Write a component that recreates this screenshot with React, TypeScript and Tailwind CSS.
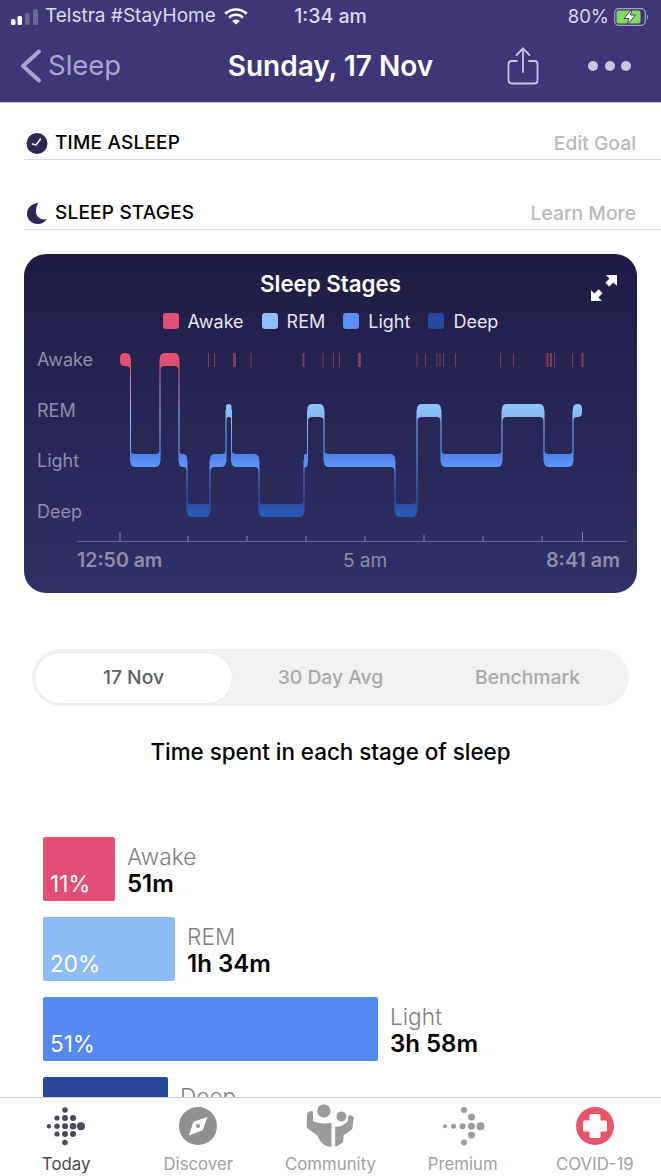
const levels: Record<string, { y: number; fill: string }> = {
  awake: { y: 353, fill: 'url(#bandAwake)' },
  rem: { y: 404, fill: 'url(#bandRem)' },
  light: { y: 454, fill: 'url(#bandLight)' },
  deep: { y: 504, fill: 'url(#bandDeep)' },
};

const segments: [string, number, number][] = [
  ['awake', 120, 130.5],
  ['light', 130.5, 160],
  ['awake', 160, 179],
  ['light', 179, 187],
  ['deep', 187, 210],
  ['light', 210, 226],
  ['rem', 226, 231.5],
  ['light', 231.5, 259],
  ['deep', 259, 304],
  ['light', 304, 307.5],
  ['rem', 307.5, 324],
  ['light', 324, 395],
  ['deep', 395, 417],
  ['rem', 417, 441],
  ['light', 441, 502],
  ['rem', 502, 544],
  ['light', 544, 573],
  ['rem', 573, 582],
];

const awakeTicks: [number, number][] = [
  [208, 1], [214, 1], [233, 3], [250.5, 1], [302.5, 2], [322.5, 1], [333, 1], [339, 1], [358, 3], [416.5, 1],
  [425, 1], [436.5, 1], [439.5, 1], [443, 1], [455, 1], [500, 1], [513, 1], [546.5, 2], [550, 2], [554, 1],
  [572, 1], [581.5, 2],
];

const axisTicks: [number, number][] = [
  [120, 532], [188, 536], [247, 536], [306, 536], [365, 536], [424, 535], [483, 536], [542, 536], [582.5, 532],
];

const H = 13;

function bandPath(i: number) {
  const [name, x0, x1] = segments[i];
  const y = levels[name].y;
  const prev = i > 0 ? levels[segments[i - 1][0]].y : null;
  const next = i < segments.length - 1 ? levels[segments[i + 1][0]].y : null;
  const r = Math.min(5, (x1 - x0) / 2);
  const b = y + H;
  const prevAbove = prev !== null && prev < y;
  const prevBelow = prev !== null && prev > y;
  const nextAbove = next !== null && next < y;
  const nextBelow = next !== null && next > y;
  let d = prevAbove ? `M${x0} ${y - r} Q${x0} ${y} ${x0 + r} ${y}` : `M${x0} ${y + r} Q${x0} ${y} ${x0 + r} ${y}`;
  d += nextAbove ? ` L${x1 - r} ${y} Q${x1} ${y} ${x1} ${y - r}` : ` L${x1 - r} ${y} Q${x1} ${y} ${x1} ${y + r}`;
  d += nextBelow ? ` L${x1} ${b + r} Q${x1} ${b} ${x1 - r} ${b}` : ` L${x1} ${b - r} Q${x1} ${b} ${x1 - r} ${b}`;
  d += prevBelow ? ` L${x0 + r} ${b} Q${x0} ${b} ${x0} ${b + r}` : ` L${x0 + r} ${b} Q${x0} ${b} ${x0} ${b - r}`;
  return d + ' Z';
}

function SleepChart() {
  return (
    <svg viewBox="24 345 613 248" className="block h-[248px] w-[613px]">
      <defs>
        <linearGradient id="link" gradientUnits="userSpaceOnUse" x1="0" y1="360" x2="0" y2="510">
          <stop offset="0" stopColor="#e6506f" />
          <stop offset="0.36" stopColor="#8dc0fa" />
          <stop offset="0.7" stopColor="#5b8ff7" />
          <stop offset="1" stopColor="#2a55ad" />
        </linearGradient>
        <linearGradient id="bandAwake" gradientUnits="userSpaceOnUse" x1="0" y1="353" x2="0" y2="367">
          <stop offset="0" stopColor="#e8506e" />
          <stop offset="1" stopColor="#d94f72" />
        </linearGradient>
        <linearGradient id="bandRem" gradientUnits="userSpaceOnUse" x1="0" y1="404" x2="0" y2="417">
          <stop offset="0" stopColor="#92c6fd" />
          <stop offset="1" stopColor="#84b8f5" />
        </linearGradient>
        <linearGradient id="bandLight" gradientUnits="userSpaceOnUse" x1="0" y1="449" x2="0" y2="467">
          <stop offset="0" stopColor="#4a7ae0" />
          <stop offset="1" stopColor="#5f95ff" />
        </linearGradient>
        <linearGradient id="bandDeep" gradientUnits="userSpaceOnUse" x1="0" y1="499" x2="0" y2="517">
          <stop offset="0" stopColor="#274a9a" />
          <stop offset="1" stopColor="#2c5abb" />
        </linearGradient>
      </defs>
      {[
        ['Awake', 366],
        ['REM', 417],
        ['Light', 467],
        ['Deep', 518],
      ].map(([label, y]) => (
        <text key={label} x="37" y={y} fontSize="18" fill="#8e8eab">
          {label}
        </text>
      ))}
      {awakeTicks.map(([x, w]) => (
        <rect key={x} x={x} y="353" width={w} height="14" fill="#e6506f" opacity="0.5" />
      ))}
      {segments.slice(1).map(([name, x], i) => {
        const a = levels[segments[i][0]].y;
        const b = levels[name].y;
        return (
          <rect key={x} x={x - 0.5} y={Math.min(a, b) + 6} width="1" height={Math.abs(a - b) + 2} fill="url(#link)" />
        );
      })}
      {segments.map(([name], i) => (
        <path key={i} d={bandPath(i)} fill={levels[name].fill} />
      ))}
      <rect x="77" y="541" width="550" height="1" fill="#67678c" />
      {axisTicks.map(([x, top]) => (
        <rect key={x} x={x - 0.5} y={top} width="1" height={541 - top} fill="#8b8ba8" />
      ))}
      <text x="77" y="567" fontSize="19.500" fontWeight="600" fill="#8e8eab">
        12:50 am
      </text>
      <text x="365" y="567" fontSize="19" textAnchor="middle" fill="#8e8eab">
        5 am
      </text>
      <text x="620" y="567" fontSize="19.800" fontWeight="600" textAnchor="end" fill="#8e8eab">
        8:41 am
      </text>
    </svg>
  );
}

function SignalBars() {
  return (
    <svg width="28" height="16" viewBox="0 0 28 16" className="shrink-0">
      <rect x="0" y="10" width="4.5" height="6" rx="1.5" fill="#fff" />
      <rect x="6.5" y="7" width="4.5" height="9" rx="1.5" fill="#fff" />
      <rect x="14" y="4" width="4.5" height="12" rx="1.5" fill="#6e6899" />
      <rect x="22" y="0" width="5" height="16" rx="1.5" fill="#6e6899" />
    </svg>
  );
}

function WifiIcon() {
  return (
    <svg width="24" height="17" viewBox="0 0 24 17" fill="none" stroke="#fff" strokeWidth="2.6" className="shrink-0">
      <path d="M1.2 5.8C7.2 0 16.8 0 22.8 5.8" />
      <path d="M5 9.6C9 5.8 15 5.8 19 9.6" />
      <path d="M12 16.6 8.2 13C10.4 11 13.6 11 15.8 13Z" fill="#fff" stroke="none" />
    </svg>
  );
}

function BatteryIcon() {
  return (
    <svg width="36" height="18" viewBox="0 0 36 18" className="shrink-0">
      <rect x="0.7" y="0.7" width="30.6" height="16.6" rx="4" fill="none" stroke="#a3a0c4" strokeWidth="1.2" />
      <rect x="2.5" y="2.5" width="24" height="13" rx="2.2" fill="#7fdc5c" />
      <path d="M33 6.5c1.6.5 1.6 4.5 0 5Z" fill="#a3a0c4" />
      <path d="M18 1 10 10.5h5L13 17l8.500-10h-5Z" fill="#fff" stroke="#3f3677" strokeWidth="1" />
    </svg>
  );
}

function ShareIcon() {
  return (
    <svg width="32" height="38" viewBox="0 0 32 38" fill="none" stroke="#c9c6e0" strokeWidth="1.8" strokeLinecap="round" strokeLinejoin="round">
      <path d="M10 14H4.500a3 3 0 0 0-3 3v16.500a3 3 0 0 0 3 3h23a3 3 0 0 0 3-3V17a3 3 0 0 0-3-3H22" />
      <path d="M16 25V1.500" />
      <path d="M9.500 8 16 1.500 22.500 8" />
    </svg>
  );
}

function ExpandIcon() {
  return (
    <svg width="28" height="28" viewBox="0 0 28 28" fill="#fff">
      <path d="M16 1h11v11l-3.600-3.600-4.200 4.200-3.900-3.900 4.200-4.200Z" />
      <path d="M1 16v11h11l-3.600-3.600 4.200-4.200-3.900-3.900-4.200 4.200Z" />
    </svg>
  );
}

function ClockIcon() {
  return (
    <svg width="22" height="21" viewBox="0 0 22 21">
      <circle cx="11" cy="10.500" r="10.500" fill="#2c2855" />
      <path d="M10 12 14.500 6M10 12 6.500 11" stroke="#fff" strokeWidth="1.500" strokeLinecap="round" fill="none" />
    </svg>
  );
}

function MoonIcon() {
  return (
    <svg width="22" height="21" viewBox="0 0 22 21">
      <path d="M12.500 0C7 .3 1 4 1 10.500S6.500 21 11.500 21c4 0 7.500-2 9.500-5-5.500 1.500-11-1.500-11-7.500C10 5 11 2 12.500 0Z" fill="#2c2855" />
    </svg>
  );
}

function SectionRow({ icon, title, action, className }: { icon: React.ReactNode; title: string; action: string; className: string }) {
  return (
    <div className={`ml-[24px] flex h-[32px] items-center border-b border-[#dedede] pl-[2px] pr-[25px] ${className}`}>
      <span className="mr-[7px] flex w-[22px] justify-center">{icon}</span>
      <span className="text-[19px] font-medium tracking-[0.2px] text-black">{title}</span>
      <span className="ml-auto text-[19.300px] font-medium text-[#b9b9b9]">{action}</span>
    </div>
  );
}

const legend = [
  { label: 'Awake', color: 'bg-[#e25175]' },
  { label: 'REM', color: 'bg-[#8dc0fa]' },
  { label: 'Light', color: 'bg-[#5b8ff7]' },
  { label: 'Deep', color: 'bg-[#2747a0]' },
];

const bars = [
  { label: 'Awake', time: '51m', pct: '11%', width: 'w-[72px]', color: 'bg-[#e04e73]' },
  { label: 'REM', time: '1h 34m', pct: '20%', width: 'w-[132px]', color: 'bg-[#8dbdf6]' },
  { label: 'Light', time: '3h 58m', pct: '51%', width: 'w-[335px]', color: 'bg-[#5488f2]' },
  // only the top of this row is in view
  { label: 'Deep', time: '\u00a0', pct: '', width: 'w-[125px]', color: 'bg-[#27479b]' },
];

function FitbitDots({ dots, fill }: { dots: number[][]; fill: string }) {
  return (
    <svg width="44" height="44" viewBox="0 0 44 44">
      {dots.map(([x, y, r]) => (
        <circle key={`${x}-${y}`} cx={x} cy={y} r={r} fill={fill} />
      ))}
    </svg>
  );
}

const todayDots = [
  [5, 22.300, 2.200], [13, 22.300, 2.700], [21, 22.300, 3], [29, 22.300, 3.300], [37, 22.300, 4],
  [13, 14, 2.600], [21, 14, 3], [29, 14, 3], [13, 30, 2.600], [21, 30, 3], [29, 30, 3],
  [21, 6, 2.800], [21, 38.500, 2.800],
];

const premiumDots = [
  [4, 22.300, 2], [12.500, 22.300, 2.500], [21.500, 22.300, 3], [30.500, 22.300, 3.500], [39.500, 22.300, 4],
  [30.500, 13, 3.500], [30.500, 31, 3.500], [23, 6, 3], [23, 38.500, 3],
];

function CompassIcon() {
  return (
    <svg width="44" height="44" viewBox="0 0 44 44">
      <circle cx="22" cy="22" r="19" fill="#8f8f8f" />
      <path d="M31.500 13 26.700 26.300 12.800 31.500 17.500 17.800Z" fill="#fff" />
      <circle cx="22" cy="22" r="2" fill="#8f8f8f" />
    </svg>
  );
}

function CommunityIcon() {
  return (
    <svg width="53" height="47" viewBox="70 10 160 140" fill="#9b9b9b">
      <circle cx="130" cy="36" r="20" />
      <circle cx="183" cy="53" r="15" />
      <path d="M80 42Q88 33 97 38L98 68Q125 78 153 72V145Q125 145 110 110L90 95Q78 90 78 80Z" />
      <path d="M164 84Q185 85 202 68L204 50Q212 47 220 55L216 90Q200 105 190 108L188 130Q175 142 164 145Z" />
    </svg>
  );
}

function CovidIcon() {
  return (
    <svg width="44" height="44" viewBox="0 0 44 44">
      <circle cx="22" cy="22" r="19" fill="#e95469" />
      <path d="M18 10h8a1.500 1.500 0 0 1 1.500 1.500v5h5a1.500 1.500 0 0 1 1.500 1.500v8a1.500 1.500 0 0 1-1.500 1.500h-5v5a1.500 1.500 0 0 1-1.500 1.500h-8a1.500 1.500 0 0 1-1.500-1.500v-5h-5a1.500 1.500 0 0 1-1.500-1.500v-8a1.500 1.500 0 0 1 1.500-1.500h5v-5A1.500 1.500 0 0 1 18 10Z" fill="#fff" />
    </svg>
  );
}

const tabs = [
  { label: 'Today', active: true, icon: <FitbitDots dots={todayDots} fill="#4a4a5c" /> },
  { label: 'Discover', active: false, icon: <CompassIcon /> },
  { label: 'Community', active: false, icon: <CommunityIcon /> },
  { label: 'Premium', active: false, icon: <FitbitDots dots={premiumDots} fill="#9b9b9b" /> },
  { label: 'COVID-19', active: false, icon: <CovidIcon /> },
];

export default function App() {
  return (
    <div className="flex h-[1176px] w-[661px] flex-col overflow-hidden bg-white font-['Inter',sans-serif]">
      <header className="h-[103px] shrink-0 border-b border-[#c9c7d8] bg-[#3f3677]">
        <div className="grid h-[33px] grid-cols-[1fr_auto_1fr] items-center text-[19px] text-[#dcdaea]">
          <div className="flex items-center pl-[11px]">
            <SignalBars />
            <span className="ml-[6px] mr-[8px]">Telstra #StayHome</span>
            <WifiIcon />
          </div>
          <span className="text-[19.500px] font-medium">1:34 am</span>
          <div className="flex items-center justify-end pr-[11px]">
            <span className="mr-[5px] text-[18.500px]">80%</span>
            <BatteryIcon />
          </div>
        </div>
        <div className="grid h-[66px] grid-cols-[1fr_auto_1fr] items-center">
          <div className="flex items-center pl-[20px]">
            <svg width="22" height="34" viewBox="0 0 22 34" fill="none" stroke="#a9a5cc" strokeWidth="4" strokeLinecap="round" strokeLinejoin="round">
              <path d="M19 2.500 3 17l16 14.500" />
            </svg>
            <span className="ml-[6px] text-[27.500px] text-[#a9a5cc]">Sleep</span>
          </div>
          <span className="text-[28px] font-semibold text-white">Sunday, 17 Nov</span>
          <div className="flex items-center justify-end pr-[30px]">
            <ShareIcon />
            <div className="ml-[49px] flex gap-[6.500px]">
              <span className="size-[10px] rounded-full bg-[#c9c6e0]" />
              <span className="size-[10px] rounded-full bg-[#c9c6e0]" />
              <span className="size-[10px] rounded-full bg-[#c9c6e0]" />
            </div>
          </div>
        </div>
      </header>

      <main className="min-h-0 flex-1 overflow-hidden">
        <SectionRow className="mt-[25px]" icon={<ClockIcon />} title="TIME ASLEEP" action="Edit Goal" />
        <SectionRow className="mt-[38px]" icon={<MoonIcon />} title="SLEEP STAGES" action="Learn More" />

        <section className="relative ml-[24px] mt-[24px] h-[339px] w-[613px] overflow-hidden rounded-[22px] bg-linear-to-b from-[#1f1b45] to-[#2f3165]">
          <h2 className="pt-[16px] text-center text-[22.300px] font-semibold leading-[28px] text-white">Sleep Stages</h2>
          <div className="mt-[11px] flex h-[24px] items-center justify-center gap-[18px] text-[18px] text-[#e6e5f0]">
            {legend.map((item) => (
              <div key={item.label} className="flex items-center gap-[9px]">
                <span className={`size-[16px] rounded-[3px] ${item.color}`} />
                <span>{item.label}</span>
              </div>
            ))}
          </div>
          <div className="absolute left-0 top-[91px]">
            <SleepChart />
          </div>
          <div className="absolute right-[19px] top-[20px]">
            <ExpandIcon />
          </div>
        </section>

        <div className="ml-[32px] mt-[56px] grid h-[57px] w-[597px] grid-cols-3 items-center rounded-full bg-[#f1f1f1] px-[3px] text-[19.300px] font-medium text-[#a9a9a9]">
          <div className="flex h-[50px] items-center justify-center rounded-full bg-white text-[#5c5f63] shadow-[0_0_2px_rgba(0,0,0,0.08)]">17 Nov</div>
          <div className="text-center">30 Day Avg</div>
          <div className="text-center">Benchmark</div>
        </div>

        <h3 className="mt-[34px] text-center text-[22.400px] font-medium leading-[24px] text-black">Time spent in each stage of sleep</h3>

        <div className="ml-[43px] mt-[73px] flex flex-col gap-[16px]">
          {bars.map((bar) => (
            <div key={bar.label} className="flex h-[64px] items-center gap-[12px]">
              <div className={`flex h-[64px] items-end rounded-[2px] pb-[4px] pl-[7px] text-[22.500px] leading-[26px] text-white ${bar.width} ${bar.color}`}>{bar.pct}</div>
              <div className="pt-[2px] leading-[27px]">
                <div className="text-[22.700px] font-light text-[#808080]">{bar.label}</div>
                <div className="text-[24px] font-semibold text-black">{bar.time}</div>
              </div>
            </div>
          ))}
        </div>
      </main>

      <nav className="grid h-[79px] shrink-0 grid-cols-5 border-t border-[#cfcfcf] bg-white pt-[4px]">
        {tabs.map((tab) => (
          <div key={tab.label} className="flex flex-col items-center">
            <div className="flex h-[47px] items-center justify-center">{tab.icon}</div>
            <span className={`mt-[5px] text-[16.800px] leading-[20px] ${tab.active ? 'text-[#4a4a4a]' : 'text-[#a0a0a0]'}`}>{tab.label}</span>
          </div>
        ))}
      </nav>
    </div>
  );
}
